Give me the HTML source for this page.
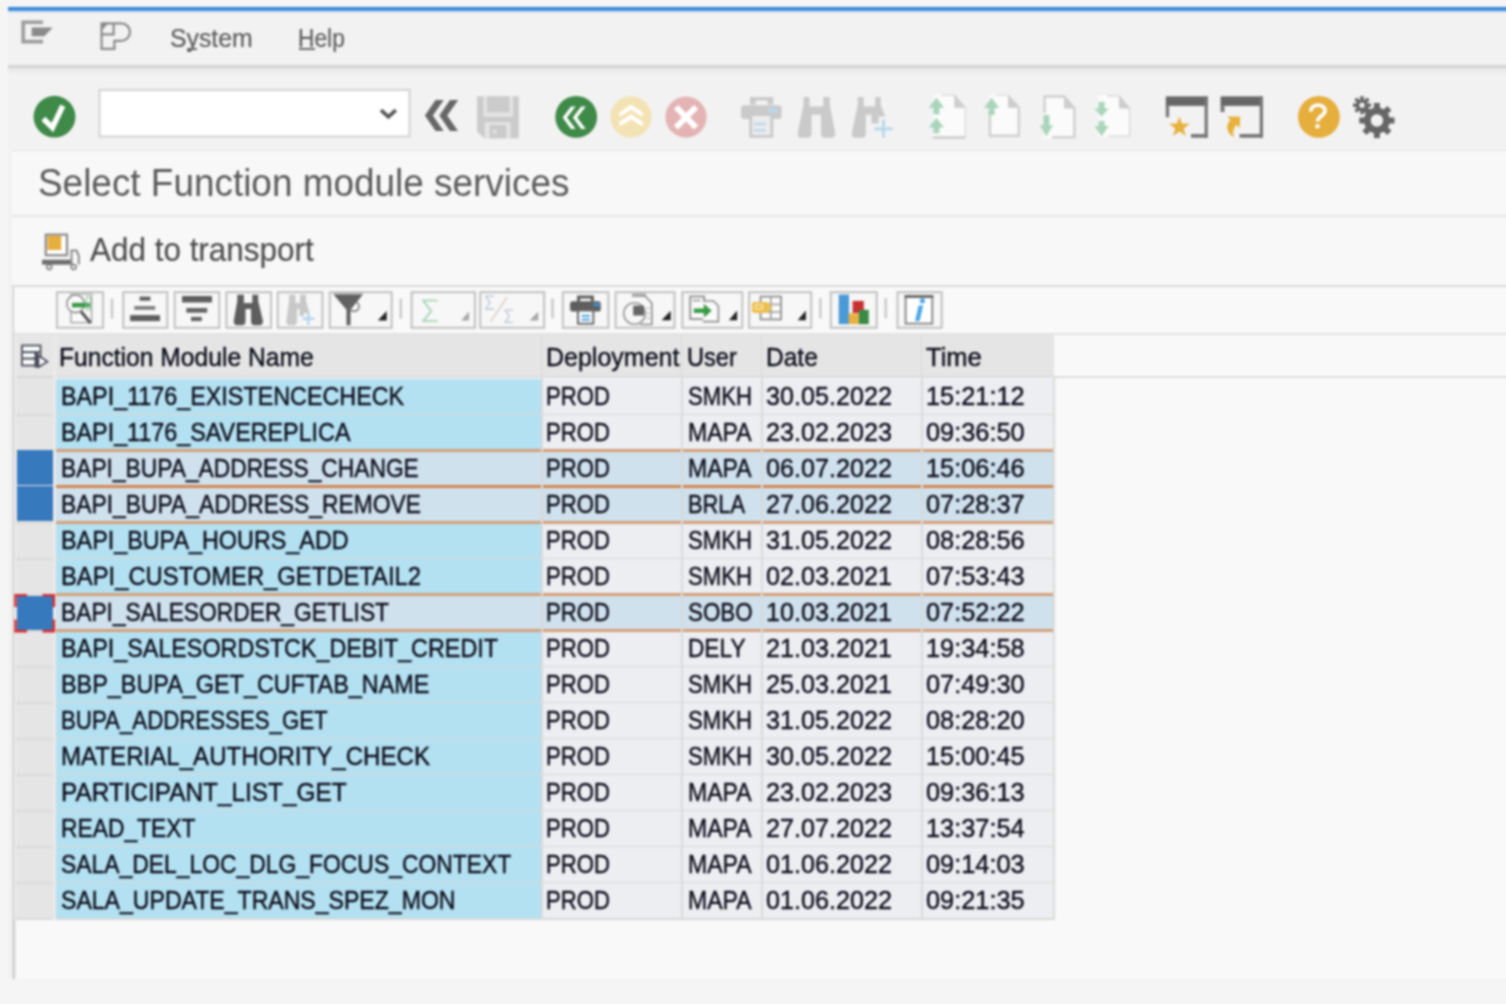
<!DOCTYPE html>
<html><head><meta charset="utf-8">
<style>
*{margin:0;padding:0;box-sizing:border-box}
html,body{width:1506px;height:1004px;overflow:hidden;background:#f5f5f5;font-family:"Liberation Sans",sans-serif}
.a{position:absolute}
#win{left:8px;top:6px;width:1518px;height:973px;background:#f2f2f2}
#blue{left:8px;top:7px;width:1518px;height:5px;background:linear-gradient(#2a7ad0,#3a88d8 45%,#78b2e8 75%,#b8d8f2)}
#menusep{left:8px;top:65px;width:1518px;height:10px;background:linear-gradient(#d4d4d4,#d4d4d4 25%,#e6e6e6 35%,#ececec 60%,#f2f2f2)}
.menu{top:22px;font-size:24px;color:#5f5f5f}
#title{left:12px;top:150px;width:1514px;height:67px;background:#f8f8f8;border-top:1px solid #e3e3e3;border-bottom:2px solid #e6e6e6}
#apptb{left:12px;top:217px;width:1514px;height:69px;background:#f8f8f8}
#alv{left:12px;top:285px;width:1514px;height:694px;background:linear-gradient(to right,#ececec,#cfcfcf 1.2px,#cfcfcf 2.4px,#f0f0f0 3.6px,#f9f9f9 5px);border-top:2px solid #d9d9d9}
#alvtb{left:14px;top:287px;width:1512px;height:46px;background:#f9f9f9}
.btn{top:291px;height:38px;border:2px solid #cdcdcd;background:#f4f4f4;border-radius:2px}
.sep{top:298px;width:3px;height:24px;background:#c8c8c8}
.hdr{background:#e5e5e5}
.htxt{font-size:25px;line-height:43px;color:#2a2a38;white-space:nowrap}
.cell{height:36px;font-size:25px;color:#20202c;line-height:38px;white-space:nowrap;overflow:hidden;padding-left:4px}
.nm{letter-spacing:-0.9px}
.t{white-space:nowrap;transform-origin:0 0;-webkit-text-stroke:0.45px currentColor}

#root{position:absolute;left:-20px;top:-20px;width:1546px;height:1044px;background:#f5f5f5;filter:blur(0.8px)}
#inner{position:absolute;left:20px;top:20px;width:1506px;height:1004px}

</style></head><body><div id="root"><div id="inner">
<div class="a" id="win"></div>
<div class="a" style="left:8px;top:6px;width:1518px;height:1px;background:#fbfbfb"></div>
<div class="a" id="blue"></div>
<div class="a" id="menusep"></div>
<div class="a" id="title"></div>
<div class="a" id="apptb"></div>
<div class="a" id="alv"></div>
<div class="a" id="alvtb"></div>
<div class="a t" style="left:169.60px;top:24.89px;font-size:26px;line-height:26px;color:#5c5c5c;transform:scaleX(0.9540);-webkit-text-stroke:0.2px #5c5c5c">System</div>
<div class="a t" style="left:298.10px;top:24.89px;font-size:26px;line-height:26px;color:#5c5c5c;transform:scaleX(0.8751);-webkit-text-stroke:0.2px #5c5c5c">Help</div>
<div class="a" style="left:187px;top:48px;width:10px;height:2px;background:#6a6a6a"></div>
<div class="a" style="left:299px;top:48px;width:16px;height:2px;background:#6a6a6a"></div>
<div class="a t" style="left:38.00px;top:162.99px;font-size:39px;line-height:39px;color:#5a5a5a;transform:scaleX(0.9465);-webkit-text-stroke:0">Select Function module services</div>
<div class="a t" style="left:89.70px;top:233.99px;font-size:32.5px;line-height:32.5px;color:#4d4d4d;transform:scaleX(0.9674);-webkit-text-stroke:0.15px #4d4d4d">Add to transport</div>
<div class="a" style="left:14px;top:333px;width:1512px;height:2px;background:#e2e2e2"></div>
<div class="a" style="left:14px;top:335px;width:1040px;height:43px;background:#ebebeb"></div>
<div class="a" style="left:16.5px;top:335.5px;width:36px;height:42.5px;background:#e6e6e6;border-bottom:2px solid #d6d6d6"></div>
<div class="a hdr" style="left:56px;top:335px;width:486px;height:43px"></div>
<div class="a" style="left:541px;top:335px;width:2px;height:43px;background:#d9d9d9"></div>
<div class="a hdr" style="left:542px;top:335px;width:140px;height:43px"></div>
<div class="a" style="left:681px;top:335px;width:2px;height:43px;background:#d9d9d9"></div>
<div class="a hdr" style="left:682px;top:335px;width:80px;height:43px"></div>
<div class="a" style="left:761px;top:335px;width:2px;height:43px;background:#d9d9d9"></div>
<div class="a hdr" style="left:762px;top:335px;width:160px;height:43px"></div>
<div class="a" style="left:921px;top:335px;width:2px;height:43px;background:#d9d9d9"></div>
<div class="a hdr" style="left:922px;top:335px;width:132px;height:43px"></div>
<div class="a t" style="left:59.20px;top:343.87px;font-size:26.5px;line-height:26.5px;color:#0e0e1c;transform:scaleX(0.9297);">Function Module Name</div>
<div class="a t" style="left:546.00px;top:343.87px;font-size:26.5px;line-height:26.5px;color:#0e0e1c;transform:scaleX(0.9434);">Deployment</div>
<div class="a t" style="left:687.40px;top:343.87px;font-size:26.5px;line-height:26.5px;color:#0e0e1c;transform:scaleX(0.8902);">User</div>
<div class="a t" style="left:766.10px;top:343.87px;font-size:26.5px;line-height:26.5px;color:#0e0e1c;transform:scaleX(0.9255);">Date</div>
<div class="a t" style="left:925.60px;top:343.87px;font-size:26.5px;line-height:26.5px;color:#0e0e1c;transform:scaleX(0.9637);">Time</div>
<div class="a" style="left:56px;top:376px;width:1470px;height:2px;background:#dcdcdc"></div>
<div class="a" style="left:14px;top:378px;width:42px;height:541.95px;background:#eaeaea"></div>
<div class="a" style="left:16.5px;top:378px;width:36px;height:541.95px;background:#e5e5e5"></div>
<div class="a" style="left:16px;top:413.53px;width:37px;height:2px;background:#dadada"></div>
<div class="a" style="left:56px;top:378.50px;width:486px;height:36.03px;background:#b3e1f1"></div>
<div class="a t" style="left:60.50px;top:382.57px;font-size:26.5px;line-height:26.5px;color:#0e0e1c;transform:scaleX(0.8802);">BAPI_1176_EXISTENCECHECK</div>
<div class="a" style="left:542px;top:378.50px;width:140px;height:36.03px;background:#eceef2"></div>
<div class="a t" style="left:546.00px;top:382.57px;font-size:26.5px;line-height:26.5px;color:#0e0e1c;transform:scaleX(0.8359);">PROD</div>
<div class="a" style="left:682px;top:378.50px;width:80px;height:36.03px;background:#eceef2"></div>
<div class="a t" style="left:687.50px;top:382.57px;font-size:26.5px;line-height:26.5px;color:#0e0e1c;transform:scaleX(0.8360);">SMKH</div>
<div class="a" style="left:762px;top:378.50px;width:160px;height:36.03px;background:#eceef2"></div>
<div class="a t" style="left:766.00px;top:382.57px;font-size:26.5px;line-height:26.5px;color:#0e0e1c;transform:scaleX(0.9497);">30.05.2022</div>
<div class="a" style="left:922px;top:378.50px;width:132px;height:36.03px;background:#eceef2"></div>
<div class="a t" style="left:926.00px;top:382.57px;font-size:26.5px;line-height:26.5px;color:#0e0e1c;transform:scaleX(0.9566);">15:21:12</div>
<div class="a" style="left:56px;top:413.53px;width:998px;height:2px;background:#d8d8d8"></div>
<div class="a" style="left:16px;top:449.56px;width:37px;height:2px;background:#dadada"></div>
<div class="a" style="left:56px;top:414.53px;width:486px;height:36.03px;background:#b3e1f1"></div>
<div class="a t" style="left:60.50px;top:418.60px;font-size:26.5px;line-height:26.5px;color:#0e0e1c;transform:scaleX(0.8799);">BAPI_1176_SAVEREPLICA</div>
<div class="a" style="left:542px;top:414.53px;width:140px;height:36.03px;background:#eceef2"></div>
<div class="a t" style="left:546.00px;top:418.60px;font-size:26.5px;line-height:26.5px;color:#0e0e1c;transform:scaleX(0.8359);">PROD</div>
<div class="a" style="left:682px;top:414.53px;width:80px;height:36.03px;background:#eceef2"></div>
<div class="a t" style="left:687.50px;top:418.60px;font-size:26.5px;line-height:26.5px;color:#0e0e1c;transform:scaleX(0.8682);">MAPA</div>
<div class="a" style="left:762px;top:414.53px;width:160px;height:36.03px;background:#eceef2"></div>
<div class="a t" style="left:766.00px;top:418.60px;font-size:26.5px;line-height:26.5px;color:#0e0e1c;transform:scaleX(0.9497);">23.02.2023</div>
<div class="a" style="left:922px;top:414.53px;width:132px;height:36.03px;background:#eceef2"></div>
<div class="a t" style="left:926.00px;top:418.60px;font-size:26.5px;line-height:26.5px;color:#0e0e1c;transform:scaleX(0.9566);">09:36:50</div>
<div class="a" style="left:56px;top:449.56px;width:998px;height:2px;background:#d8d8d8"></div>
<div class="a" style="left:16px;top:485.59px;width:37px;height:2px;background:#dadada"></div>
<div class="a" style="left:56px;top:450.56px;width:486px;height:36.03px;background:#cfe1ec"></div>
<div class="a t" style="left:60.50px;top:454.63px;font-size:26.5px;line-height:26.5px;color:#0e0e1c;transform:scaleX(0.8595);">BAPI_BUPA_ADDRESS_CHANGE</div>
<div class="a" style="left:542px;top:450.56px;width:140px;height:36.03px;background:#cfe1ec"></div>
<div class="a t" style="left:546.00px;top:454.63px;font-size:26.5px;line-height:26.5px;color:#0e0e1c;transform:scaleX(0.8359);">PROD</div>
<div class="a" style="left:682px;top:450.56px;width:80px;height:36.03px;background:#cfe1ec"></div>
<div class="a t" style="left:687.50px;top:454.63px;font-size:26.5px;line-height:26.5px;color:#0e0e1c;transform:scaleX(0.8682);">MAPA</div>
<div class="a" style="left:762px;top:450.56px;width:160px;height:36.03px;background:#cfe1ec"></div>
<div class="a t" style="left:766.00px;top:454.63px;font-size:26.5px;line-height:26.5px;color:#0e0e1c;transform:scaleX(0.9497);">06.07.2022</div>
<div class="a" style="left:922px;top:450.56px;width:132px;height:36.03px;background:#cfe1ec"></div>
<div class="a t" style="left:926.00px;top:454.63px;font-size:26.5px;line-height:26.5px;color:#0e0e1c;transform:scaleX(0.9566);">15:06:46</div>
<div class="a" style="left:56px;top:485.59px;width:998px;height:2px;background:#d8d8d8"></div>
<div class="a" style="left:16px;top:521.62px;width:37px;height:2px;background:#dadada"></div>
<div class="a" style="left:56px;top:486.59px;width:486px;height:36.03px;background:#cfe1ec"></div>
<div class="a t" style="left:60.50px;top:490.66px;font-size:26.5px;line-height:26.5px;color:#0e0e1c;transform:scaleX(0.8617);">BAPI_BUPA_ADDRESS_REMOVE</div>
<div class="a" style="left:542px;top:486.59px;width:140px;height:36.03px;background:#cfe1ec"></div>
<div class="a t" style="left:546.00px;top:490.66px;font-size:26.5px;line-height:26.5px;color:#0e0e1c;transform:scaleX(0.8359);">PROD</div>
<div class="a" style="left:682px;top:486.59px;width:80px;height:36.03px;background:#cfe1ec"></div>
<div class="a t" style="left:687.50px;top:490.66px;font-size:26.5px;line-height:26.5px;color:#0e0e1c;transform:scaleX(0.8235);">BRLA</div>
<div class="a" style="left:762px;top:486.59px;width:160px;height:36.03px;background:#cfe1ec"></div>
<div class="a t" style="left:766.00px;top:490.66px;font-size:26.5px;line-height:26.5px;color:#0e0e1c;transform:scaleX(0.9497);">27.06.2022</div>
<div class="a" style="left:922px;top:486.59px;width:132px;height:36.03px;background:#cfe1ec"></div>
<div class="a t" style="left:926.00px;top:490.66px;font-size:26.5px;line-height:26.5px;color:#0e0e1c;transform:scaleX(0.9566);">07:28:37</div>
<div class="a" style="left:56px;top:521.62px;width:998px;height:2px;background:#d8d8d8"></div>
<div class="a" style="left:16px;top:557.65px;width:37px;height:2px;background:#dadada"></div>
<div class="a" style="left:56px;top:522.62px;width:486px;height:36.03px;background:#b3e1f1"></div>
<div class="a t" style="left:60.50px;top:526.69px;font-size:26.5px;line-height:26.5px;color:#0e0e1c;transform:scaleX(0.8810);">BAPI_BUPA_HOURS_ADD</div>
<div class="a" style="left:542px;top:522.62px;width:140px;height:36.03px;background:#eceef2"></div>
<div class="a t" style="left:546.00px;top:526.69px;font-size:26.5px;line-height:26.5px;color:#0e0e1c;transform:scaleX(0.8359);">PROD</div>
<div class="a" style="left:682px;top:522.62px;width:80px;height:36.03px;background:#eceef2"></div>
<div class="a t" style="left:687.50px;top:526.69px;font-size:26.5px;line-height:26.5px;color:#0e0e1c;transform:scaleX(0.8360);">SMKH</div>
<div class="a" style="left:762px;top:522.62px;width:160px;height:36.03px;background:#eceef2"></div>
<div class="a t" style="left:766.00px;top:526.69px;font-size:26.5px;line-height:26.5px;color:#0e0e1c;transform:scaleX(0.9497);">31.05.2022</div>
<div class="a" style="left:922px;top:522.62px;width:132px;height:36.03px;background:#eceef2"></div>
<div class="a t" style="left:926.00px;top:526.69px;font-size:26.5px;line-height:26.5px;color:#0e0e1c;transform:scaleX(0.9566);">08:28:56</div>
<div class="a" style="left:56px;top:557.65px;width:998px;height:2px;background:#d8d8d8"></div>
<div class="a" style="left:16px;top:593.68px;width:37px;height:2px;background:#dadada"></div>
<div class="a" style="left:56px;top:558.65px;width:486px;height:36.03px;background:#b3e1f1"></div>
<div class="a t" style="left:60.50px;top:562.72px;font-size:26.5px;line-height:26.5px;color:#0e0e1c;transform:scaleX(0.8976);">BAPI_CUSTOMER_GETDETAIL2</div>
<div class="a" style="left:542px;top:558.65px;width:140px;height:36.03px;background:#eceef2"></div>
<div class="a t" style="left:546.00px;top:562.72px;font-size:26.5px;line-height:26.5px;color:#0e0e1c;transform:scaleX(0.8359);">PROD</div>
<div class="a" style="left:682px;top:558.65px;width:80px;height:36.03px;background:#eceef2"></div>
<div class="a t" style="left:687.50px;top:562.72px;font-size:26.5px;line-height:26.5px;color:#0e0e1c;transform:scaleX(0.8360);">SMKH</div>
<div class="a" style="left:762px;top:558.65px;width:160px;height:36.03px;background:#eceef2"></div>
<div class="a t" style="left:766.00px;top:562.72px;font-size:26.5px;line-height:26.5px;color:#0e0e1c;transform:scaleX(0.9497);">02.03.2021</div>
<div class="a" style="left:922px;top:558.65px;width:132px;height:36.03px;background:#eceef2"></div>
<div class="a t" style="left:926.00px;top:562.72px;font-size:26.5px;line-height:26.5px;color:#0e0e1c;transform:scaleX(0.9566);">07:53:43</div>
<div class="a" style="left:56px;top:593.68px;width:998px;height:2px;background:#d8d8d8"></div>
<div class="a" style="left:16px;top:629.71px;width:37px;height:2px;background:#dadada"></div>
<div class="a" style="left:56px;top:594.68px;width:486px;height:36.03px;background:#cfe1ec"></div>
<div class="a t" style="left:60.50px;top:598.75px;font-size:26.5px;line-height:26.5px;color:#0e0e1c;transform:scaleX(0.8599);">BAPI_SALESORDER_GETLIST</div>
<div class="a" style="left:542px;top:594.68px;width:140px;height:36.03px;background:#cfe1ec"></div>
<div class="a t" style="left:546.00px;top:598.75px;font-size:26.5px;line-height:26.5px;color:#0e0e1c;transform:scaleX(0.8359);">PROD</div>
<div class="a" style="left:682px;top:594.68px;width:80px;height:36.03px;background:#cfe1ec"></div>
<div class="a t" style="left:687.50px;top:598.75px;font-size:26.5px;line-height:26.5px;color:#0e0e1c;transform:scaleX(0.8422);">SOBO</div>
<div class="a" style="left:762px;top:594.68px;width:160px;height:36.03px;background:#cfe1ec"></div>
<div class="a t" style="left:766.00px;top:598.75px;font-size:26.5px;line-height:26.5px;color:#0e0e1c;transform:scaleX(0.9497);">10.03.2021</div>
<div class="a" style="left:922px;top:594.68px;width:132px;height:36.03px;background:#cfe1ec"></div>
<div class="a t" style="left:926.00px;top:598.75px;font-size:26.5px;line-height:26.5px;color:#0e0e1c;transform:scaleX(0.9566);">07:52:22</div>
<div class="a" style="left:56px;top:629.71px;width:998px;height:2px;background:#d8d8d8"></div>
<div class="a" style="left:16px;top:665.74px;width:37px;height:2px;background:#dadada"></div>
<div class="a" style="left:56px;top:630.71px;width:486px;height:36.03px;background:#b3e1f1"></div>
<div class="a t" style="left:60.50px;top:634.78px;font-size:26.5px;line-height:26.5px;color:#0e0e1c;transform:scaleX(0.8805);">BAPI_SALESORDSTCK_DEBIT_CREDIT</div>
<div class="a" style="left:542px;top:630.71px;width:140px;height:36.03px;background:#eceef2"></div>
<div class="a t" style="left:546.00px;top:634.78px;font-size:26.5px;line-height:26.5px;color:#0e0e1c;transform:scaleX(0.8359);">PROD</div>
<div class="a" style="left:682px;top:630.71px;width:80px;height:36.03px;background:#eceef2"></div>
<div class="a t" style="left:687.50px;top:634.78px;font-size:26.5px;line-height:26.5px;color:#0e0e1c;transform:scaleX(0.8549);">DELY</div>
<div class="a" style="left:762px;top:630.71px;width:160px;height:36.03px;background:#eceef2"></div>
<div class="a t" style="left:766.00px;top:634.78px;font-size:26.5px;line-height:26.5px;color:#0e0e1c;transform:scaleX(0.9497);">21.03.2021</div>
<div class="a" style="left:922px;top:630.71px;width:132px;height:36.03px;background:#eceef2"></div>
<div class="a t" style="left:926.00px;top:634.78px;font-size:26.5px;line-height:26.5px;color:#0e0e1c;transform:scaleX(0.9566);">19:34:58</div>
<div class="a" style="left:56px;top:665.74px;width:998px;height:2px;background:#d8d8d8"></div>
<div class="a" style="left:16px;top:701.77px;width:37px;height:2px;background:#dadada"></div>
<div class="a" style="left:56px;top:666.74px;width:486px;height:36.03px;background:#b3e1f1"></div>
<div class="a t" style="left:60.50px;top:670.81px;font-size:26.5px;line-height:26.5px;color:#0e0e1c;transform:scaleX(0.8829);">BBP_BUPA_GET_CUFTAB_NAME</div>
<div class="a" style="left:542px;top:666.74px;width:140px;height:36.03px;background:#eceef2"></div>
<div class="a t" style="left:546.00px;top:670.81px;font-size:26.5px;line-height:26.5px;color:#0e0e1c;transform:scaleX(0.8359);">PROD</div>
<div class="a" style="left:682px;top:666.74px;width:80px;height:36.03px;background:#eceef2"></div>
<div class="a t" style="left:687.50px;top:670.81px;font-size:26.5px;line-height:26.5px;color:#0e0e1c;transform:scaleX(0.8360);">SMKH</div>
<div class="a" style="left:762px;top:666.74px;width:160px;height:36.03px;background:#eceef2"></div>
<div class="a t" style="left:766.00px;top:670.81px;font-size:26.5px;line-height:26.5px;color:#0e0e1c;transform:scaleX(0.9497);">25.03.2021</div>
<div class="a" style="left:922px;top:666.74px;width:132px;height:36.03px;background:#eceef2"></div>
<div class="a t" style="left:926.00px;top:670.81px;font-size:26.5px;line-height:26.5px;color:#0e0e1c;transform:scaleX(0.9566);">07:49:30</div>
<div class="a" style="left:56px;top:701.77px;width:998px;height:2px;background:#d8d8d8"></div>
<div class="a" style="left:16px;top:737.80px;width:37px;height:2px;background:#dadada"></div>
<div class="a" style="left:56px;top:702.77px;width:486px;height:36.03px;background:#b3e1f1"></div>
<div class="a t" style="left:60.50px;top:706.84px;font-size:26.5px;line-height:26.5px;color:#0e0e1c;transform:scaleX(0.8397);">BUPA_ADDRESSES_GET</div>
<div class="a" style="left:542px;top:702.77px;width:140px;height:36.03px;background:#eceef2"></div>
<div class="a t" style="left:546.00px;top:706.84px;font-size:26.5px;line-height:26.5px;color:#0e0e1c;transform:scaleX(0.8359);">PROD</div>
<div class="a" style="left:682px;top:702.77px;width:80px;height:36.03px;background:#eceef2"></div>
<div class="a t" style="left:687.50px;top:706.84px;font-size:26.5px;line-height:26.5px;color:#0e0e1c;transform:scaleX(0.8360);">SMKH</div>
<div class="a" style="left:762px;top:702.77px;width:160px;height:36.03px;background:#eceef2"></div>
<div class="a t" style="left:766.00px;top:706.84px;font-size:26.5px;line-height:26.5px;color:#0e0e1c;transform:scaleX(0.9497);">31.05.2022</div>
<div class="a" style="left:922px;top:702.77px;width:132px;height:36.03px;background:#eceef2"></div>
<div class="a t" style="left:926.00px;top:706.84px;font-size:26.5px;line-height:26.5px;color:#0e0e1c;transform:scaleX(0.9566);">08:28:20</div>
<div class="a" style="left:56px;top:737.80px;width:998px;height:2px;background:#d8d8d8"></div>
<div class="a" style="left:16px;top:773.83px;width:37px;height:2px;background:#dadada"></div>
<div class="a" style="left:56px;top:738.80px;width:486px;height:36.03px;background:#b3e1f1"></div>
<div class="a t" style="left:60.50px;top:742.87px;font-size:26.5px;line-height:26.5px;color:#0e0e1c;transform:scaleX(0.9091);">MATERIAL_AUTHORITY_CHECK</div>
<div class="a" style="left:542px;top:738.80px;width:140px;height:36.03px;background:#eceef2"></div>
<div class="a t" style="left:546.00px;top:742.87px;font-size:26.5px;line-height:26.5px;color:#0e0e1c;transform:scaleX(0.8359);">PROD</div>
<div class="a" style="left:682px;top:738.80px;width:80px;height:36.03px;background:#eceef2"></div>
<div class="a t" style="left:687.50px;top:742.87px;font-size:26.5px;line-height:26.5px;color:#0e0e1c;transform:scaleX(0.8360);">SMKH</div>
<div class="a" style="left:762px;top:738.80px;width:160px;height:36.03px;background:#eceef2"></div>
<div class="a t" style="left:766.00px;top:742.87px;font-size:26.5px;line-height:26.5px;color:#0e0e1c;transform:scaleX(0.9497);">30.05.2022</div>
<div class="a" style="left:922px;top:738.80px;width:132px;height:36.03px;background:#eceef2"></div>
<div class="a t" style="left:926.00px;top:742.87px;font-size:26.5px;line-height:26.5px;color:#0e0e1c;transform:scaleX(0.9566);">15:00:45</div>
<div class="a" style="left:56px;top:773.83px;width:998px;height:2px;background:#d8d8d8"></div>
<div class="a" style="left:16px;top:809.86px;width:37px;height:2px;background:#dadada"></div>
<div class="a" style="left:56px;top:774.83px;width:486px;height:36.03px;background:#b3e1f1"></div>
<div class="a t" style="left:60.50px;top:778.90px;font-size:26.5px;line-height:26.5px;color:#0e0e1c;transform:scaleX(0.9192);">PARTICIPANT_LIST_GET</div>
<div class="a" style="left:542px;top:774.83px;width:140px;height:36.03px;background:#eceef2"></div>
<div class="a t" style="left:546.00px;top:778.90px;font-size:26.5px;line-height:26.5px;color:#0e0e1c;transform:scaleX(0.8359);">PROD</div>
<div class="a" style="left:682px;top:774.83px;width:80px;height:36.03px;background:#eceef2"></div>
<div class="a t" style="left:687.50px;top:778.90px;font-size:26.5px;line-height:26.5px;color:#0e0e1c;transform:scaleX(0.8682);">MAPA</div>
<div class="a" style="left:762px;top:774.83px;width:160px;height:36.03px;background:#eceef2"></div>
<div class="a t" style="left:766.00px;top:778.90px;font-size:26.5px;line-height:26.5px;color:#0e0e1c;transform:scaleX(0.9497);">23.02.2023</div>
<div class="a" style="left:922px;top:774.83px;width:132px;height:36.03px;background:#eceef2"></div>
<div class="a t" style="left:926.00px;top:778.90px;font-size:26.5px;line-height:26.5px;color:#0e0e1c;transform:scaleX(0.9566);">09:36:13</div>
<div class="a" style="left:56px;top:809.86px;width:998px;height:2px;background:#d8d8d8"></div>
<div class="a" style="left:16px;top:845.89px;width:37px;height:2px;background:#dadada"></div>
<div class="a" style="left:56px;top:810.86px;width:486px;height:36.03px;background:#b3e1f1"></div>
<div class="a t" style="left:60.50px;top:814.93px;font-size:26.5px;line-height:26.5px;color:#0e0e1c;transform:scaleX(0.8611);">READ_TEXT</div>
<div class="a" style="left:542px;top:810.86px;width:140px;height:36.03px;background:#eceef2"></div>
<div class="a t" style="left:546.00px;top:814.93px;font-size:26.5px;line-height:26.5px;color:#0e0e1c;transform:scaleX(0.8359);">PROD</div>
<div class="a" style="left:682px;top:810.86px;width:80px;height:36.03px;background:#eceef2"></div>
<div class="a t" style="left:687.50px;top:814.93px;font-size:26.5px;line-height:26.5px;color:#0e0e1c;transform:scaleX(0.8682);">MAPA</div>
<div class="a" style="left:762px;top:810.86px;width:160px;height:36.03px;background:#eceef2"></div>
<div class="a t" style="left:766.00px;top:814.93px;font-size:26.5px;line-height:26.5px;color:#0e0e1c;transform:scaleX(0.9497);">27.07.2022</div>
<div class="a" style="left:922px;top:810.86px;width:132px;height:36.03px;background:#eceef2"></div>
<div class="a t" style="left:926.00px;top:814.93px;font-size:26.5px;line-height:26.5px;color:#0e0e1c;transform:scaleX(0.9566);">13:37:54</div>
<div class="a" style="left:56px;top:845.89px;width:998px;height:2px;background:#d8d8d8"></div>
<div class="a" style="left:16px;top:881.92px;width:37px;height:2px;background:#dadada"></div>
<div class="a" style="left:56px;top:846.89px;width:486px;height:36.03px;background:#b3e1f1"></div>
<div class="a t" style="left:60.50px;top:850.96px;font-size:26.5px;line-height:26.5px;color:#0e0e1c;transform:scaleX(0.8636);">SALA_DEL_LOC_DLG_FOCUS_CONTEXT</div>
<div class="a" style="left:542px;top:846.89px;width:140px;height:36.03px;background:#eceef2"></div>
<div class="a t" style="left:546.00px;top:850.96px;font-size:26.5px;line-height:26.5px;color:#0e0e1c;transform:scaleX(0.8359);">PROD</div>
<div class="a" style="left:682px;top:846.89px;width:80px;height:36.03px;background:#eceef2"></div>
<div class="a t" style="left:687.50px;top:850.96px;font-size:26.5px;line-height:26.5px;color:#0e0e1c;transform:scaleX(0.8682);">MAPA</div>
<div class="a" style="left:762px;top:846.89px;width:160px;height:36.03px;background:#eceef2"></div>
<div class="a t" style="left:766.00px;top:850.96px;font-size:26.5px;line-height:26.5px;color:#0e0e1c;transform:scaleX(0.9497);">01.06.2022</div>
<div class="a" style="left:922px;top:846.89px;width:132px;height:36.03px;background:#eceef2"></div>
<div class="a t" style="left:926.00px;top:850.96px;font-size:26.5px;line-height:26.5px;color:#0e0e1c;transform:scaleX(0.9566);">09:14:03</div>
<div class="a" style="left:56px;top:881.92px;width:998px;height:2px;background:#d8d8d8"></div>
<div class="a" style="left:16px;top:917.95px;width:37px;height:2px;background:#dadada"></div>
<div class="a" style="left:56px;top:882.92px;width:486px;height:36.03px;background:#b3e1f1"></div>
<div class="a t" style="left:60.50px;top:886.99px;font-size:26.5px;line-height:26.5px;color:#0e0e1c;transform:scaleX(0.8707);">SALA_UPDATE_TRANS_SPEZ_MON</div>
<div class="a" style="left:542px;top:882.92px;width:140px;height:36.03px;background:#eceef2"></div>
<div class="a t" style="left:546.00px;top:886.99px;font-size:26.5px;line-height:26.5px;color:#0e0e1c;transform:scaleX(0.8359);">PROD</div>
<div class="a" style="left:682px;top:882.92px;width:80px;height:36.03px;background:#eceef2"></div>
<div class="a t" style="left:687.50px;top:886.99px;font-size:26.5px;line-height:26.5px;color:#0e0e1c;transform:scaleX(0.8682);">MAPA</div>
<div class="a" style="left:762px;top:882.92px;width:160px;height:36.03px;background:#eceef2"></div>
<div class="a t" style="left:766.00px;top:886.99px;font-size:26.5px;line-height:26.5px;color:#0e0e1c;transform:scaleX(0.9497);">01.06.2022</div>
<div class="a" style="left:922px;top:882.92px;width:132px;height:36.03px;background:#eceef2"></div>
<div class="a t" style="left:926.00px;top:886.99px;font-size:26.5px;line-height:26.5px;color:#0e0e1c;transform:scaleX(0.9566);">09:21:35</div>
<div class="a" style="left:56px;top:917.95px;width:998px;height:2px;background:#d8d8d8"></div>
<div class="a" style="left:16.6px;top:450.3px;width:36.4px;height:34.30px;background:#3679bd"></div>
<div class="a" style="left:16.6px;top:486.2px;width:36.4px;height:34.40px;background:#3679bd"></div>
<div class="a" style="left:16.6px;top:595.5px;width:36.4px;height:34.70px;background:#3679bd"></div>
<div class="a" style="left:56px;top:449.36px;width:998px;height:2.4px;background:#d6a07a"></div>
<div class="a" style="left:56px;top:484.79px;width:998px;height:3.6px;background:#d48650"></div>
<div class="a" style="left:56px;top:521.42px;width:998px;height:2.4px;background:#d6a07a"></div>
<div class="a" style="left:56px;top:593.18px;width:998px;height:3px;background:#d6a07a"></div>
<div class="a" style="left:56px;top:629.21px;width:998px;height:3px;background:#d6a07a"></div>
<svg class="a" style="left:0;top:0" width="80" height="1004"><path d="M15.5,607 V595.1 H27 M42.5,595.1 H53.9 V607 M53.9,619.5 V631.2 H42.5 M27,631.2 H15.5 V619.5" fill="none" stroke="#e02a2a" stroke-width="2.4"/></svg>
<div class="a" style="left:541px;top:378px;width:2px;height:541.95px;background:#d9d9d9"></div>
<div class="a" style="left:681px;top:378px;width:2px;height:541.95px;background:#d9d9d9"></div>
<div class="a" style="left:761px;top:378px;width:2px;height:541.95px;background:#d9d9d9"></div>
<div class="a" style="left:921px;top:378px;width:2px;height:541.95px;background:#d9d9d9"></div>
<div class="a" style="left:1053px;top:378px;width:2px;height:541.95px;background:#d9d9d9"></div>
<svg class="a" style="left:0;top:0" width="1506" height="1004" viewBox="0 0 1506 1004">
<!-- menu icons -->
<path d="M43,22.2 H23.2 V41.6 H43" fill="none" stroke="#9c9c9c" stroke-width="3.6"/>
<polygon points="31.7,27.6 52.8,27.6 44.2,36.2 31.7,36.2" fill="#8a8a8a"/>
<path d="M101.6,23.3 H121.2 A8.8,8.8 0 0 1 121.2,40.9 H114.4 V48.8 H101.6 Z M101.6,34.4 H113.6 V23.3" fill="none" stroke="#8a8a8a" stroke-width="2.2"/>
<polygon points="101.6,23.3 108.5,23.3 101.6,30.5" fill="#8a8a8a"/>
<!-- command field -->
<rect x="99.5" y="90" width="310" height="46.5" fill="#ffffff" stroke="#d2d2d2" stroke-width="2"/>
<polyline points="381,110.2 388.4,116.8 395.8,110.2" fill="none" stroke="#555" stroke-width="3.6"/>
<!-- check -->
<circle cx="54.5" cy="116.7" r="20.9" fill="#3f8a48"/>
<polyline points="43.3,118.8 52.4,127.6 62.8,105.8" fill="none" stroke="#fff" stroke-width="5.5"/>
<!-- back chevrons -->
<polygon points="435.6,100 443.8,100 432.8,115.5 443.6,131 435.6,131 424.9,115.5" fill="#676767"/>
<polygon points="450,100 458.2,100 447.2,115.5 458,131 450,131 439.3,115.5" fill="#676767"/>
<!-- save -->
<path d="M477,96.3 H518.8 V138.2 H484 L477,131.2 Z" fill="#cbcbcb"/>
<rect x="483.4" y="96.3" width="29.6" height="20.5" fill="#e4e4e4"/>
<rect x="487" y="96.3" width="22.5" height="16.2" fill="#cbcbcb"/>
<rect x="484.8" y="122.3" width="25.7" height="15.9" fill="#e4e4e4"/>
<rect x="489.5" y="125" width="17" height="13.2" fill="#cbcbcb"/>
<circle cx="494.7" cy="131.6" r="2" fill="#e4e4e4"/>
<!-- green back -->
<circle cx="576.2" cy="116.9" r="20.9" fill="#3f8a48"/>
<polygon points="571,106.4 575.6,106.4 567,117.6 575.6,128.9 571,128.9 562.6,117.6" fill="#fff"/>
<polygon points="581.2,106.4 585.8,106.4 577.2,117.6 585.8,128.9 581.2,128.9 572.8,117.6" fill="#fff"/>
<!-- yellow up -->
<circle cx="631" cy="116.9" r="20.6" fill="#f3e3b4"/>
<polygon points="631,104.8 642.6,112.2 642.6,117 631,109.6 619.6,117 619.6,112.2" fill="#fff"/>
<polygon points="631,114.3 642.6,121.7 642.6,126.6 631,119.2 619.6,126.6 619.6,121.7" fill="#fff"/>
<!-- red x -->
<circle cx="686" cy="117" r="20.6" fill="#e4b4b4"/>
<path d="M676,107 L696,127.5 M696,107 L676,127.5" stroke="#fff" stroke-width="6"/>
<!-- printer gray -->
<path d="M750,104.5 V97 H773.3 V104.5 H767.5 V100.6 H755.8 V104.5 Z" fill="#cacaca"/>
<rect x="741" y="105.3" width="40.6" height="13.8" rx="3" fill="#cacaca"/>
<rect x="749.2" y="116" width="24.1" height="21.7" fill="#cacaca"/>
<rect x="752.2" y="116" width="18.1" height="19" fill="#ececec"/>
<rect x="754" y="122.8" width="12" height="2.4" fill="#b9d8ec"/>
<rect x="754" y="129.2" width="12" height="2.4" fill="#b9d8ec"/>
<rect x="768" y="108" width="9.5" height="4.5" rx="2" fill="#b9d8ec"/>
<!-- binoculars gray -->
<path d="M803.5,97 H809.6 V106.4 H823.2 V97 H829.8 V105 L835.3,133.5 Q835.3,137.7 831.3,137.7 H825 Q821,137.7 821,133.5 V114.7 H811.6 V133.5 Q811.6,137.7 807.6,137.7 H801.5 Q797.5,137.7 797.5,133.5 L803.5,105 Z" fill="#cacaca"/>
<path d="M857.7,97 H863.8 V106.4 H875.2 V97 H880.8 V105 L885.2,116.5 H878.6 V123.4 H871.4 V114.7 H865.8 V133.5 Q865.8,137.7 861.8,137.7 H855.7 Q851.7,137.7 851.7,133.5 L857.7,105 Z" fill="#cacaca"/>
<rect x="874.5" y="127.4" width="18" height="3" fill="#b9d8ec"/>
<rect x="882" y="119.8" width="3" height="18" fill="#b9d8ec"/>
<!-- page up-up -->
<polygon points="933,94.6 954.3,94.6 965.3,107.7 965.3,139 933,139" fill="#fbfbfb"/>
<path d="M941,95.3 H954.3 L965.3,107.7 V137" fill="none" stroke="#dddddd" stroke-width="1.6"/>
<polygon points="954.3,94.6 965.3,107.7 954.3,107.7" fill="#cdcdcd"/>
<rect x="933" y="136" width="32.3" height="3" fill="#d2d2d2"/>
<polygon points="928.8,107.7 936.4,97.5 944,107.7" fill="#a9d5bb"/><rect x="933.4" y="107" width="6" height="7.3" fill="#a9d5bb"/>
<polygon points="928.8,127.4 936.4,118 944,127.4" fill="#a9d5bb"/><rect x="933.4" y="126.8" width="6" height="6.5" fill="#a9d5bb"/>
<!-- page up -->
<polygon points="988.7,94.6 1008,94.6 1020,107.7 1020,137 988.7,137" fill="#fbfbfb"/>
<path d="M989.9,112 V135.8 H1018.8 V107.7" fill="none" stroke="#d0d0d0" stroke-width="2.5"/>
<path d="M996,95.3 H1008 L1020,107.7" fill="none" stroke="#e0e0e0" stroke-width="1.5"/>
<polygon points="1008,94.6 1020,107.7 1008,107.7" fill="#cdcdcd"/>
<polygon points="984,108 991.6,97.5 999.2,108" fill="#a9d5bb"/><rect x="988.6" y="107.4" width="6" height="7.6" fill="#a9d5bb"/>
<!-- page down -->
<polygon points="1043.4,95.3 1064,95.3 1075.6,108.5 1075.6,138.4 1043.4,138.4" fill="#fbfbfb"/>
<path d="M1044.6,113 V96.5 H1064 L1074.4,108.5 V137.2 H1052" fill="none" stroke="#d0d0d0" stroke-width="2.5"/>
<polygon points="1064,95.3 1075.6,108.5 1064,108.5" fill="#cdcdcd"/>
<rect x="1043.4" y="115" width="6" height="10.8" fill="#a9d5bb"/><polygon points="1039.8,125.3 1046.4,136.2 1053,125.3" fill="#a9d5bb"/>
<!-- page down-down -->
<polygon points="1098.2,95.3 1119,95.3 1130.4,108.5 1130.4,137 1098.2,137" fill="#fbfbfb"/>
<path d="M1107,96 H1119 L1129.6,108.5 V136.3 H1108" fill="none" stroke="#dadada" stroke-width="1.6"/>
<polygon points="1119,95.3 1130.4,108.5 1119,108.5" fill="#cdcdcd"/>
<rect x="1098.6" y="101.9" width="6" height="7.2" fill="#a9d5bb"/><polygon points="1094.5,108.5 1101.6,116.5 1108.7,108.5" fill="#a9d5bb"/>
<rect x="1098.6" y="120.9" width="6" height="5.7" fill="#a9d5bb"/><polygon points="1094.5,126 1101.6,136.2 1108.7,126" fill="#a9d5bb"/>
<!-- window star -->
<rect x="1165.8" y="96.4" width="42" height="9.5" fill="#666"/>
<rect x="1165.8" y="105" width="3.3" height="12.2" fill="#777"/>
<rect x="1204.6" y="96.4" width="3.2" height="41.3" fill="#777"/>
<rect x="1191" y="134" width="16.8" height="3.7" fill="#777"/>
<polygon points="1179.4,116.5 1182,123.5 1189.8,123.7 1183.6,128.4 1185.9,136.1 1179.4,131.6 1172.9,136.1 1175.2,128.4 1169,123.7 1176.8,123.5" fill="#e8b13f"/>
<!-- window arrow -->
<rect x="1220.6" y="96.4" width="42.4" height="9.5" fill="#666"/>
<rect x="1220.6" y="105" width="3.9" height="7.1" fill="#777"/>
<rect x="1259.7" y="96.4" width="3.3" height="41.3" fill="#777"/>
<rect x="1239.6" y="134" width="23.4" height="3.7" fill="#777"/>
<path d="M1233.8,137.2 C1226.5,133 1225,125 1230.3,120.2 L1227.4,116.5 H1240 V128.2 L1236.8,124.8 C1233.2,128.5 1232.6,132.5 1233.8,137.2 Z" fill="#e8b13f"/>
<!-- help -->
<circle cx="1318.9" cy="116.9" r="20.9" fill="#e6ae3c"/>
<path d="M1310.8,111.5 C1310.8,103.2 1325,103.2 1325,110.8 C1325,115.8 1317.6,116.2 1317.6,121.6" fill="none" stroke="#fff" stroke-width="3.8"/>
<circle cx="1317.5" cy="126.2" r="2.2" fill="#fff"/>
<!-- gear -->
<g fill="#666">
<circle cx="1376.9" cy="120.5" r="13"/>
<g transform="translate(1376.9,120.5)">
<rect x="-3" y="-17.6" width="6" height="35.2"/>
<rect x="-3" y="-17.6" width="6" height="35.2" transform="rotate(45)"/>
<rect x="-3" y="-17.6" width="6" height="35.2" transform="rotate(90)"/>
<rect x="-3" y="-17.6" width="6" height="35.2" transform="rotate(135)"/>
</g>
<circle cx="1362" cy="105.2" r="6"/>
<g transform="translate(1362,105.2)">
<rect x="-1.8" y="-9" width="3.6" height="18"/>
<rect x="-1.8" y="-9" width="3.6" height="18" transform="rotate(45)"/>
<rect x="-1.8" y="-9" width="3.6" height="18" transform="rotate(90)"/>
<rect x="-1.8" y="-9" width="3.6" height="18" transform="rotate(135)"/>
</g>
</g>
<circle cx="1376.9" cy="120.5" r="6.2" fill="#f2f2f2"/>
<circle cx="1362" cy="105.2" r="2.6" fill="#f2f2f2"/>
<!-- truck -->
<rect x="45.8" y="234.6" width="21.2" height="20.6" fill="#fff" stroke="#8a8a8a" stroke-width="2.2"/>
<rect x="47.5" y="235.8" width="13.7" height="14.2" fill="#e6ae3c"/>
<rect x="42" y="259.7" width="30" height="5" fill="#6e6e6e"/>
<path d="M71.5,264 V250.5 H76.5 L78.8,256 V264.5" fill="none" stroke="#8a8a8a" stroke-width="2"/>
<circle cx="49.3" cy="267" r="2.4" fill="#fafafa" stroke="#777" stroke-width="1.5"/>
<circle cx="73.6" cy="267" r="2.4" fill="#fafafa" stroke="#777" stroke-width="1.5"/>
<!-- ALV toolbar buttons -->
<g fill="#f7f7f7" stroke="#c0c0c0" stroke-width="2">
<rect x="57" y="292.2" width="46" height="35.6"/>
<rect x="123.3" y="292.2" width="44" height="35.6"/>
<rect x="174.7" y="292.2" width="44.6" height="35.6"/>
<rect x="226.4" y="292.2" width="44.6" height="35.6"/>
<rect x="277.8" y="292.2" width="44.6" height="35.6"/>
<rect x="329.8" y="292.2" width="61.9" height="35.6"/>
<rect x="411.6" y="292.2" width="63.4" height="35.6"/>
<rect x="480.2" y="292.2" width="63.9" height="35.6"/>
<rect x="562.9" y="292.2" width="45.5" height="35.6"/>
<rect x="615.6" y="292.2" width="58.9" height="35.6"/>
<rect x="682.3" y="292.2" width="60" height="35.6"/>
<rect x="749.1" y="292.2" width="62.1" height="35.6"/>
<rect x="830.8" y="292.2" width="45.9" height="35.6"/>
<rect x="897.5" y="292.2" width="44.2" height="35.6"/>
</g>
<g fill="#c8c8c8">
<rect x="110.8" y="298.4" width="2.4" height="20.3" rx="1"/>
<rect x="399.6" y="298.2" width="2.4" height="20.5" rx="1"/>
<rect x="551.3" y="298.2" width="2.4" height="20.5" rx="1"/>
<rect x="819.2" y="297.8" width="2.4" height="20.6" rx="1"/>
<rect x="884.6" y="297.8" width="2.4" height="20.6" rx="1"/>
</g>
<!-- B1 layout find -->
<rect x="71" y="293.8" width="20.5" height="28.8" fill="#fafafa" stroke="#a8a8a8" stroke-width="1.5"/>
<rect x="71" y="292.2" width="20.5" height="3" fill="#c4c4c4"/>
<circle cx="75.6" cy="303.8" r="8.8" fill="#fafafa" stroke="#8e8e8e" stroke-width="1.6"/>
<rect x="72" y="302.8" width="17.6" height="4.6" fill="#3a9a48"/>
<rect x="86.5" y="297" width="4" height="13" fill="none" stroke="#8ac49a" stroke-width="1"/>
<line x1="81" y1="311.5" x2="90.5" y2="323" stroke="#555" stroke-width="3"/>
<!-- B2 sort asc -->
<rect x="139.6" y="296.6" width="10.8" height="4.1" fill="#606060"/>
<rect x="134.3" y="306.1" width="20.9" height="3.6" fill="#7a7a7a"/>
<rect x="130.1" y="315.1" width="29.9" height="6" fill="#5e5e5e"/>
<!-- B3 sort desc -->
<rect x="182" y="296" width="30" height="6.5" fill="#5e5e5e"/>
<rect x="186.3" y="308" width="20.9" height="4.7" fill="#646464"/>
<rect x="191" y="316.9" width="10.8" height="4.2" fill="#646464"/>
<!-- B4 find -->
<path d="M237.3,294.8 H243.9 V303 H252.3 V294.8 H258.2 V301 L263,321 Q263,325.2 259.5,325.2 H254.5 Q251,325.2 251,321 V309 H245.5 V321 Q245.5,325.2 242,325.2 H237.2 Q233.7,325.2 233.7,321 L237.3,301 Z" fill="#5e5e5e"/>
<!-- B5 find next gray -->
<path d="M289,294.8 H295.5 V303 H300 V294.8 H306 V301 L309.5,313 H304 V316 H299.5 V309 H297 V321 Q297,325.2 293.5,325.2 H289.5 Q286.3,325.2 286.3,321 L289,301 Z" fill="#c8c8c8"/>
<rect x="302.4" y="317.4" width="12" height="2.6" fill="#b6d6ec"/>
<rect x="307.1" y="312.7" width="2.6" height="12" fill="#b6d6ec"/>
<!-- B6 filter -->
<rect x="333.5" y="292.2" width="29.3" height="2.5" fill="#bdbdbd"/>
<polygon points="333.5,294.4 362.8,294.4 350.5,309.7 350.5,325.2 346.5,325.2 346.5,309.7" fill="#606060"/>
<circle cx="354.2" cy="306.5" r="4.8" fill="none" stroke="#6a6a6a" stroke-width="1.4"/>
<polygon points="386.7,310.9 386.7,320.5 377.8,320.5" fill="#222"/>
<!-- B7 sum -->
<path d="M437.7,300.5 H423.2 L431.2,311 L423.2,321 H437.7" fill="none" stroke="#9ccfb2" stroke-width="1.6"/>
<polygon points="469,311.4 469,320.5 461.1,320.5" fill="#a8a8a8"/>
<!-- B8 subtotal -->
<path d="M494,296.2 H485.8 L490,302.6 L485.8,309 H494" fill="none" stroke="#b9c4d6" stroke-width="1.3"/>
<line x1="490.3" y1="322" x2="507.3" y2="297" stroke="#d2c4bc" stroke-width="1.3"/>
<path d="M513.2,310.2 H505.2 L509.2,316.3 L505.2,322.3 H513.2" fill="none" stroke="#b9c4d6" stroke-width="1.3"/>
<polygon points="538.2,311.4 538.2,320.5 529.6,320.5" fill="#a8a8a8"/>
<!-- B9 print -->
<path d="M577,301.5 V295.6 H593.9 V301.5 H590.8 V298.6 H580.1 V301.5 Z" fill="#5e5e5e"/>
<rect x="570.1" y="301.2" width="30.7" height="10.4" rx="2.5" fill="#5e5e5e"/>
<rect x="578" y="310.5" width="15.3" height="13.2" fill="#fff" stroke="#6a6a6a" stroke-width="2"/>
<rect x="581.5" y="314.8" width="8.5" height="2" fill="#4aa0e0"/>
<rect x="581.5" y="318.6" width="8.5" height="2" fill="#4aa0e0"/>
<rect x="593.5" y="303" width="6.5" height="3.2" fill="#3d8fd0"/>
<!-- B10 views -->
<rect x="632" y="292.5" width="14" height="3.5" fill="#bdbdbd"/>
<path d="M632,296 H645 L651.8,303 V324.5 H640" fill="none" stroke="#8a8a8a" stroke-width="1.6"/>
<circle cx="634.5" cy="313.5" r="10.8" fill="none" stroke="#999" stroke-width="1.6"/>
<rect x="633.2" y="305.6" width="10.8" height="9.9" fill="#666"/>
<path d="M646.5,308 H650 M646.5,313 H650 M646.5,318 H650" stroke="#aaa" stroke-width="1.2"/>
<polygon points="670.7,310.7 670.7,320.2 661.6,320.2" fill="#222"/>
<!-- B11 export -->
<rect x="690.2" y="296.5" width="14" height="22.5" fill="#fafafa" stroke="#8e8e8e" stroke-width="1.8"/>
<rect x="692.5" y="299.5" width="8" height="2" fill="#aaa"/>
<path d="M702.9,301 H713.5 L718.4,306 V321.6 H702.9" fill="#fafafa" stroke="#8e8e8e" stroke-width="1.6"/>
<rect x="693.8" y="308.5" width="10.5" height="4.4" fill="#3a9a45"/>
<polygon points="703.8,303.8 711.8,310.7 703.8,317.6" fill="#3a9a45"/>
<polygon points="737.1,310.6 737.1,320.2 728.9,320.2" fill="#222"/>
<!-- B12 layout -->
<rect x="760.6" y="296.6" width="20.4" height="22.8" fill="#fafafa" stroke="#8e8e8e" stroke-width="1.8"/>
<path d="M770.8,297 V319.5 M761,304.4 H781 M761,312 H781" stroke="#9a9a9a" stroke-width="1.5"/>
<rect x="752" y="301.9" width="16.5" height="11" rx="2" fill="#ecc04f"/>
<polygon points="768.3,302.5 772.5,307.4 768.3,312.3" fill="#ecc04f"/>
<rect x="755.5" y="305" width="7" height="4" fill="none" stroke="#fff3c8" stroke-width="1"/>
<polygon points="805.9,310.6 805.9,320.2 797.7,320.2" fill="#222"/>
<!-- B13 chart -->
<rect x="838.7" y="294.6" width="10.3" height="29.6" fill="#4a9ad8"/>
<rect x="852.6" y="300.9" width="11.2" height="12.1" fill="#c83030"/>
<rect x="848.6" y="313.4" width="10.3" height="10.8" fill="#e8b040"/>
<rect x="858.9" y="309.8" width="9.9" height="14.4" fill="#3a8a45"/>
<!-- B14 info -->
<rect x="905.6" y="296.1" width="26.7" height="27.5" fill="#fff" stroke="#8a8a8a" stroke-width="2"/>
<rect x="904.6" y="295.1" width="28.7" height="2.8" fill="#666"/>
<circle cx="922.4" cy="300.8" r="2.6" fill="#4aa8e8"/>
<polygon points="918.6,305.5 923.2,305.5 919.6,321 915,321" fill="#4aa8e8"/>
<!-- header selector icon -->
<rect x="22" y="345.5" width="18.5" height="20" fill="#fff" stroke="#5a5a6a" stroke-width="2"/>
<rect x="22" y="351" width="18.5" height="2.2" fill="#5a5a6a"/>
<rect x="22" y="357.5" width="18.5" height="2.2" fill="#5a5a6a"/>
<rect x="34.5" y="352" width="3.5" height="15.5" fill="#4a4a5a"/>
<polygon points="38.5,355.5 47.5,361.8 38.5,367" fill="#fff" stroke="#4a4a5a" stroke-width="1.6"/>
</svg>

</div></div></body></html>
